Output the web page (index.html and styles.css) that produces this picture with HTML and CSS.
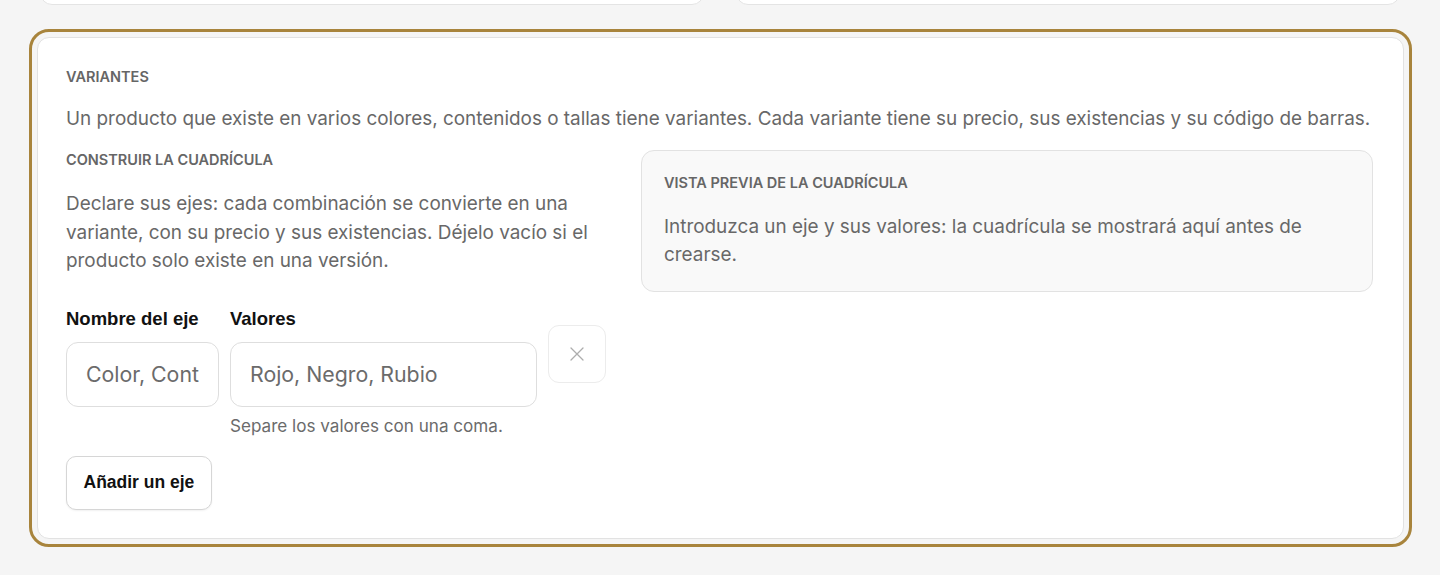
FILE: index.html
```html
<!DOCTYPE html>
<html lang="es">
<head>
    <meta charset="UTF-8">
    <meta name="viewport" content="width=device-width, initial-scale=1.0">
    <title>Variantes del producto</title>
    <link rel="stylesheet" href="styles.css">
</head>
<body>
    <div class="page">
        <!-- Tarjetas de arriba (solo se ve el borde inferior) -->
        <div class="top-row">
            <div class="top-card"></div>
            <div class="top-card"></div>
        </div>

        <!-- Variantes -->
        <section class="card focused">
            <h3 class="eyebrow">Variantes</h3>
            <p class="lead">Un producto que existe en varios colores, contenidos o tallas tiene variantes. Cada variante tiene su precio, sus existencias y su código de barras.</p>

            <div class="grid-builder">
                <div class="builder">
                    <h3 class="eyebrow">Construir la cuadrícula</h3>
                    <p class="lead">Declare sus ejes: cada combinación se convierte en una variante, con su precio y sus existencias. Déjelo vacío si el producto solo existe en una versión.</p>

                    <div class="axis-row">
                        <div class="field field-name">
                            <label for="axis-name">Nombre del eje</label>
                            <input id="axis-name" type="text" placeholder="Color, Contenido, Talla">
                        </div>
                        <div class="field field-values">
                            <label for="axis-values">Valores</label>
                            <input id="axis-values" type="text" placeholder="Rojo, Negro, Rubio">
                            <span class="hint">Separe los valores con una coma.</span>
                        </div>
                        <button class="remove" type="button" aria-label="Quitar eje">
                            <svg width="16" height="16" viewBox="0 0 16 16" fill="none" stroke="currentColor" stroke-width="1.3" stroke-linecap="round">
                                <path d="M2 2L14 14M14 2L2 14"/>
                            </svg>
                        </button>
                    </div>

                    <button class="add-axis" type="button">Añadir un eje</button>
                </div>

                <div class="preview">
                    <h3 class="eyebrow">Vista previa de la cuadrícula</h3>
                    <p class="lead">Introduzca un eje y sus valores: la cuadrícula se mostrará aquí antes de crearse.</p>
                </div>
            </div>
        </section>
    </div>
</body>
</html>
```

FILE: styles.css
```css
body {
    margin: 0;
    background-color: #f5f5f5;
    font-family: Inter, "Noto Sans", sans-serif;
    color: #111;
}
.page {
    padding: 0 40px 36px;
}
/* Tarjetas de arriba */
.top-row {
    display: grid;
    grid-template-columns: 1fr 1fr;
    gap: 32px;
    margin-top: -36px;
}
.top-card {
    height: 39px;
    background-color: #ffffff;
    border: 1px solid #e4e4e4;
    border-radius: 12px;
}
/* Tarjeta principal */
.card {
    margin: 32px -4px 0 -3px;
    padding: 29px 30px 28px 28px;
    background-color: #ffffff;
    border: 1px solid #e2e2e2;
    border-radius: 12px;
}
.focused {
    outline: 3px solid #a8843c;
    outline-offset: 5px;
}
.eyebrow {
    margin: 0;
    font-size: 14.5px;
    font-weight: 600;
    text-transform: uppercase;
    color: #666;
    line-height: 20px;
}
.lead {
    margin: 0;
    font-size: 18.9px;
    line-height: 28px;
    color: #686868;
}
.card > .lead {
    margin-top: 18px;
}
.grid-builder {
    display: grid;
    grid-template-columns: 543px 1fr;
    gap: 32px;
    align-items: start;
    margin-top: 17px;
}
.builder .lead {
    margin-top: 20px;
    line-height: 28.5px;
}
/* Ejes */
.axis-row {
    display: flex;
    align-items: flex-start;
    gap: 11px;
    margin-top: 32px;
}
.field {
    display: flex;
    flex-direction: column;
}
.field label {
    font-family: "Liberation Sans", Arial, sans-serif;
    font-weight: 700;
    font-size: 18.5px;
    line-height: 22px;
    color: #111;
    margin-bottom: 12px;
}
.field input {
    box-sizing: border-box;
    height: 65px;
    padding: 0 19px;
    border: 1px solid #dedede;
    border-radius: 12px;
    background-color: #ffffff;
    font-family: Inter, "Noto Sans", sans-serif;
    font-size: 21.3px;
    color: #333;
    outline: none;
}
.field input::placeholder {
    color: #6b6b6b;
}
.field-name input {
    width: 153px;
}
.field-values input {
    width: 307px;
}
.hint {
    margin-top: 8px;
    font-size: 17.1px;
    line-height: 22px;
    color: #6b6b6b;
}
.remove {
    box-sizing: border-box;
    width: 58px;
    height: 58px;
    margin-top: 17px;
    border: 1px solid #ececec;
    border-radius: 11px;
    background-color: #ffffff;
    color: #adadad;
    display: flex;
    align-items: center;
    justify-content: center;
    padding: 0;
}
.add-axis {
    display: block;
    margin-top: 19px;
    height: 54px;
    padding: 0 16.5px;
    border: 1px solid #d6d6d6;
    border-radius: 10px;
    background-color: #ffffff;
    box-shadow: 0 1px 2px rgba(0, 0, 0, 0.06);
    font-family: "Liberation Sans", Arial, sans-serif;
    font-weight: 700;
    font-size: 17.5px;
    color: #111;
}
/* Vista previa */
.preview {
    padding: 22px 22px 22px;
    background-color: #f9f9f9;
    border: 1px solid #e2e2e2;
    border-radius: 13px;
}
.preview .lead {
    margin-top: 20px;
}
```
